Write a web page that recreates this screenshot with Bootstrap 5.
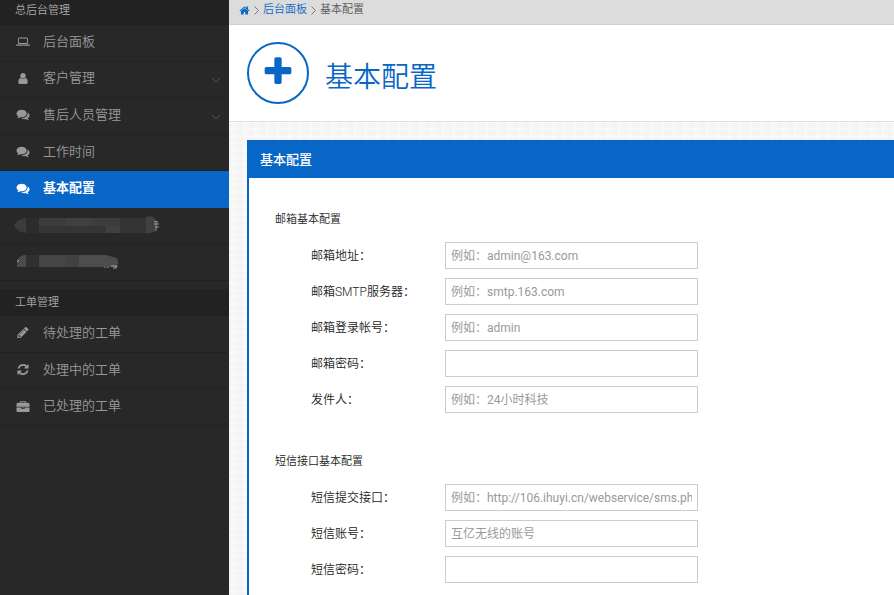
<!DOCTYPE html>
<html lang="zh-CN">
<head>
<meta charset="utf-8">
<meta name="viewport" content="width=device-width, initial-scale=1">
<title>基本配置</title>
<link href="https://cdn.jsdelivr.net/npm/bootstrap@5.3.0/dist/css/bootstrap.min.css" rel="stylesheet">
<style>
:root { --brand: #0866c6; }
body { font-family: Roboto, "Noto Sans CJK SC", sans-serif; font-size: 12px; line-height: 18px; color: #333; background: #fff; }
a { text-decoration: none; color: var(--brand); }
.glyph { fill: currentColor; flex: none; }

/* sidebar */
.side-panel { width: 229px; background: #282828; color: #999; }
.side-title { background: #222; font-size: 11px; line-height: 16px; padding: 3px 15px 6px; font-weight: 350; color: #aaa; }
.side-title-second { margin-top: 8px; padding: 6px 15px 5px; }
.side-list { height: 256px; }
.side-list-short { height: 110px; }
.side-link { flex: 1 1 0; min-height: 0; color: #999; font-size: 13px; font-weight: 350; gap: 12px; padding: 0 8px 2px 15px; border-bottom: 1px solid #222; }
.side-link:hover { color: #fff; }
.side-link.active { background: var(--brand); color: #fff; font-weight: 700; border-color: var(--brand); }
.side-link .glyph { width: 16px; height: 13px; }
.side-link .fold { width: 10px; height: 10px; fill: none; stroke: #555; margin-top: 4px; }
.side-masked { padding-left: 14px; }

/* top area */
.crumb-bar { background: #dcdcdc; border-bottom: 1px solid #d0d0d0; font-size: 11px; line-height: 16px; padding: 2px 10px 6px; gap: 4px; color: #555; font-weight: 350; }
.crumb-bar .home { width: 11px; height: 11px; }
.crumb-bar .sep { width: 5px; height: 9px; fill: none; stroke: #777; }
.page-head { padding: 17px 18px; gap: 16px; border-bottom: 1px solid #ddd; color: var(--brand); }
.head-ring { width: 62px; height: 62px; border: 2px solid var(--brand); }
.head-ring svg { width: 34px; height: 34px; }
.page-head h1 { font-size: 28px; line-height: 40px; font-weight: 350; padding-top: 10px; }

/* content */
.canvas-area { padding: 18px 0 0 18px; background-color: #f6f6f6;
  background-image: repeating-linear-gradient(0deg, rgba(0,0,0,.01) 0 1px, transparent 1px 3px, rgba(255,255,255,.4) 3px 4px, transparent 4px 7px),
    repeating-linear-gradient(90deg, rgba(0,0,0,.01) 0 1px, transparent 1px 4px, rgba(255,255,255,.4) 4px 6px, transparent 6px 11px); }
.box-head { background: var(--brand); color: #fff; font-size: 13px; line-height: 18px; font-weight: 500; padding: 11px 13px 9px; }
.box-body { background: #fff; border-left: 2px solid var(--brand); padding: 33px 26px 12px; }
.box-body fieldset + fieldset { margin-top: 40px; }
.box-body legend { font-size: 11px; line-height: 18px; margin-bottom: 13px; font-weight: 350; color: #222; }
.field-list { padding-left: 36px; gap: 9px; }
.field-list label { width: 134px; flex: none; font-weight: 350; color: #222; }
.field-list .form-control { max-width: 253px; height: 27px; padding: 3px 5px; font-size: 12px; line-height: 18px; border: 1px solid #ccc; border-radius: 0; }
.field-list .form-control::placeholder { color: #999; }
</style>
<script src="https://cdn.jsdelivr.net/npm/bootstrap@5.3.0/dist/js/bootstrap.bundle.min.js"></script>
</head>
<body>
<svg class="d-none" aria-hidden="true">
  <symbol id="i-laptop" viewBox="-160 0 2240 1600"><path d="M416 1152q-66 0-113-47t-47-113v-576q0-66 47-113t113-47h1088q66 0 113 47t47 113v576q0 66-47 113t-113 47h-1088zm-32-736v576q0 13 9.500 22.500t22.500 9.500h1088q13 0 22.500-9.500t9.500-22.500v-576q0-13-9.500-22.500t-22.500-9.500h-1088q-13 0-22.500 9.500t-9.500 22.500zm1376 800h160v96q0 40-47 68t-113 28h-1600q-66 0-113-28t-47-68v-96h1760zm-720 96q16 0 16-16t-16-16h-160q-16 0-16 16t16 16h160z"/></symbol>
  <symbol id="i-user" viewBox="0 0 1792 1792"><path d="M1536 1399q0 109-62.500 187t-150.500 78h-854q-88 0-150.500-78t-62.500-187q0-85 8.500-160.500t31.500-152 58.500-131 94-89 134.500-34.500q131 128 313 128t313-128q76 0 134.500 34.500t94 89 58.500 131 31.500 152 8.500 160.500zm-256-887q0 159-112.500 271.500t-271.500 112.500-271.500-112.500-112.500-271.500 112.500-271.500 271.500-112.500 271.500 112.500 112.500 271.500z"/></symbol>
  <symbol id="i-chat" viewBox="0 0 1792 1792"><path d="M1408 768q0 139-94 257t-256.500 186.500-353.500 68.500q-86 0-176-16-124 88-278 128-36 9-86 16h-3q-11 0-20.500-8t-11.500-21q-1-3-1-6.500t.5-6.500 2-6l2.500-5 3.500-5.500 4-5 4.500-5 4-4.500q5-6 23-25t26-29.500 22.500-29 25-38.500 20.500-44q-124-72-195-177t-71-224q0-139 94-257t256.500-186.500 353.500-68.500 353.500 68.500 256.500 186.500 94 257zm384 256q0 120-71 224.500t-195 176.500q10 24 20.500 44t25 38.500 22.500 29 26 29.500 23 25q1 1 4 4.500t4.500 5 4 5 3.500 5.500l2.500 5 2 6 .5 6.500-1 6.500q-3 14-13 22t-22 7q-50-7-86-16-154-40-278-128-90 16-176 16-271 0-472-132 58 4 88 4 161 0 309-45t264-129q125-92 192-212t67-254q0-77-23-152 129 71 204 178t75 230z"/></symbol>
  <symbol id="i-pencil" viewBox="0 0 1792 1792"><path d="M491 1536l91-91-235-235-91 91v107h128v128h107zm523-928q0-22-22-22-10 0-17 7l-542 542q-7 7-7 17 0 22 22 22 10 0 17-7l542-542q7-7 7-17zm-54-192l416 416-832 832h-416v-416zm683 96q0 53-37 90l-166 166-416-416 166-165q36-38 90-38 53 0 91 38l235 234q37 39 37 91z"/></symbol>
  <symbol id="i-refresh" viewBox="0 0 1792 1792"><path d="M1639 1056q0 5-1 7-64 268-268 434.500t-478 166.500q-146 0-282.500-55t-243.500-157l-129 129q-19 19-45 19t-45-19-19-45v-448q0-26 19-45t45-19h448q26 0 45 19t19 45-19 45l-137 137q71 66 161 102t187 36q134 0 250-65t186-179q11-17 53-117 8-23 30-23h192q13 0 22.500 9.500t9.500 22.500zm25-800v448q0 26-19 45t-45 19h-448q-26 0-45-19t-19-45 19-45l138-138q-148-137-349-137-134 0-250 65t-186 179q-11 17-53 117-8 23-30 23h-199q-13 0-22.500-9.500t-9.500-22.500v-7q65-268 270-434.500t480-166.500q146 0 284 55.500t245 156.500l130-129q19-19 45-19t45 19 19 45z"/></symbol>
  <symbol id="i-case" viewBox="0 -128 1792 1792"><path d="M640 256h512v-128h-512v128zm1152 640v480q0 66-47 113t-113 47h-1472q-66 0-113-47t-47-113v-480h672v160q0 26 19 45t45 19h320q26 0 45-19t19-45v-160h672zm-768 0v128h-256v-128h256zm768-480v384h-1792v-384q0-66 47-113t113-47h352v-160q0-40 28-68t68-28h576q40 0 68 28t28 68v160h352q66 0 113 47t47 113z"/></symbol>
  <symbol id="i-home" viewBox="0 0 1792 1792"><path d="M1472 992v480q0 26-19 45t-45 19h-384v-384h-256v384h-384q-26 0-45-19t-19-45v-480q0-1 .5-3t.5-3l575-474 575 474q1 2 1 6zm223-69l-62 74q-8 9-21 11h-3q-13 0-21-7l-692-577-692 577q-12 8-24 7-13-2-21-11l-62-74q-8-10-7-23.500t11-21.500l719-599q32-26 76-26t76 26l244 204v-195q0-14 9-23t23-9h192q14 0 23 9t9 23v408l219 182q10 8 11 21.500t-7 23.500z"/></symbol>
  <symbol id="i-plus" viewBox="0 64 1792 1792"><path d="M1600 736v192q0 40-28 68t-68 28h-416v416q0 40-28 68t-68 28h-192q-40 0-68-28t-28-68v-416h-416q-40 0-68-28t-28-68v-192q0-40 28-68t68-28h416v-416q0-40 28-68t68-28h192q40 0 68 28t28 68v416h416q40 0 68 28t28 68z"/></symbol>
  <symbol id="i-fold" viewBox="0 0 10 10"><path d="M1 3l4 4 4-4"/></symbol>
  <symbol id="i-sep" viewBox="0 0 5 9"><path d="M.5 .5l4 4-4 4"/></symbol>
</svg>

<div class="d-flex min-vh-100">
  <nav class="side-panel flex-shrink-0">
    <div class="side-title">总后台管理</div>
    <div class="side-list d-flex flex-column">
      <a class="side-link d-flex align-items-center" href="#"><svg class="glyph"><use href="#i-laptop"/></svg>后台面板</a>
      <a class="side-link d-flex align-items-center" href="#"><svg class="glyph"><use href="#i-user"/></svg>客户管理<svg class="fold ms-auto"><use href="#i-fold"/></svg></a>
      <a class="side-link d-flex align-items-center" href="#"><svg class="glyph"><use href="#i-chat"/></svg>售后人员管理<svg class="fold ms-auto"><use href="#i-fold"/></svg></a>
      <a class="side-link d-flex align-items-center" href="#"><svg class="glyph"><use href="#i-chat"/></svg>工作时间</a>
      <a class="side-link active d-flex align-items-center" href="#" aria-current="page"><svg class="glyph"><use href="#i-chat"/></svg>基本配置</a>
      <a class="side-link side-masked d-flex align-items-center" href="#">
        <svg width="146" height="18" viewBox="0 0 146 18" aria-hidden="true">
          <path d="M0 9Q3 3 12 2V17Q3 16 0 9z" fill="#3c3c3c"/><path d="M12 2h13v15H12z" fill="#2c2c2c"/>
          <path d="M25 2h107v8H25z" fill="#3c3c3c"/><path d="M25 10h107v7H25z" fill="#353535"/>
          <path d="M52 2h27v8H52zM92 10h14v7H92z" fill="#404040"/><path d="M106 2h26v15h-26z" fill="#343434"/>
          <path d="M132 1q6-2 9 2v12q-3 3-9 2z" fill="#414141"/>
          <path d="M140 5l4 1M140 8h5M141 11h4M142 6v9" stroke="#999" fill="none"/>
        </svg></a>
      <a class="side-link side-masked d-flex align-items-center" href="#">
        <svg width="106" height="15" viewBox="0 0 106 15" aria-hidden="true">
          <path d="M3 13V6q3-5 9-5v12z" fill="#4b4b4b"/><path d="M12 1h13v12H12z" fill="#303030"/>
          <path d="M25 1h40v12H25z" fill="#454545"/><path d="M65 1h27l11 3q3 5-1 9H65z" fill="#4d4d4d"/><path d="M52 1h13v12H52z" fill="#414141"/>
          <path d="M3 8l2-2M91 13v1M94 13v1M97 12h6l-1 2h-3" stroke="#aaa" fill="none"/>
        </svg></a>
    </div>
    <div class="side-title side-title-second">工单管理</div>
    <div class="side-list side-list-short d-flex flex-column">
      <a class="side-link d-flex align-items-center" href="#"><svg class="glyph"><use href="#i-pencil"/></svg>待处理的工单</a>
      <a class="side-link d-flex align-items-center" href="#"><svg class="glyph"><use href="#i-refresh"/></svg>处理中的工单</a>
      <a class="side-link d-flex align-items-center" href="#"><svg class="glyph"><use href="#i-case"/></svg>已处理的工单</a>
    </div>
  </nav>

  <main class="d-flex flex-column flex-grow-1">
    <nav class="crumb-bar d-flex align-items-center" aria-label="breadcrumb">
      <a class="d-flex" href="#" aria-label="首页"><svg class="glyph home"><use href="#i-home"/></svg></a>
      <svg class="sep"><use href="#i-sep"/></svg>
      <a href="#">后台面板</a>
      <svg class="sep"><use href="#i-sep"/></svg>
      <span>基本配置</span>
    </nav>
    <header class="page-head d-flex align-items-center">
      <span class="head-ring rounded-circle d-flex align-items-center justify-content-center flex-shrink-0"><svg class="glyph"><use href="#i-plus"/></svg></span>
      <h1 class="mb-0">基本配置</h1>
    </header>
    <div class="canvas-area flex-grow-1 d-flex flex-column">
      <h2 class="box-head mb-0">基本配置</h2>
      <form class="box-body flex-grow-1">
        <fieldset>
          <legend>邮箱基本配置</legend>
          <div class="field-list d-flex flex-column">
            <div class="d-flex align-items-center"><label for="mail">邮箱地址：</label><input class="form-control" id="mail" type="text" placeholder="例如：admin@163.com"></div>
            <div class="d-flex align-items-center"><label for="smtp">邮箱SMTP服务器：</label><input class="form-control" id="smtp" type="text" placeholder="例如：smtp.163.com"></div>
            <div class="d-flex align-items-center"><label for="login">邮箱登录帐号：</label><input class="form-control" id="login" type="text" placeholder="例如：admin"></div>
            <div class="d-flex align-items-center"><label for="mailpw">邮箱密码：</label><input class="form-control" id="mailpw" type="password"></div>
            <div class="d-flex align-items-center"><label for="sender">发件人：</label><input class="form-control" id="sender" type="text" placeholder="例如：24小时科技"></div>
          </div>
        </fieldset>
        <fieldset>
          <legend>短信接口基本配置</legend>
          <div class="field-list d-flex flex-column">
            <div class="d-flex align-items-center"><label for="api">短信提交接口：</label><input class="form-control" id="api" type="text" placeholder="例如：http://106.ihuyi.cn/webservice/sms.php"></div>
            <div class="d-flex align-items-center"><label for="smsuser">短信账号：</label><input class="form-control" id="smsuser" type="text" placeholder="互亿无线的账号"></div>
            <div class="d-flex align-items-center"><label for="smspw">短信密码：</label><input class="form-control" id="smspw" type="password"></div>
          </div>
        </fieldset>
      </form>
    </div>
  </main>
</div>
</body>
</html>
